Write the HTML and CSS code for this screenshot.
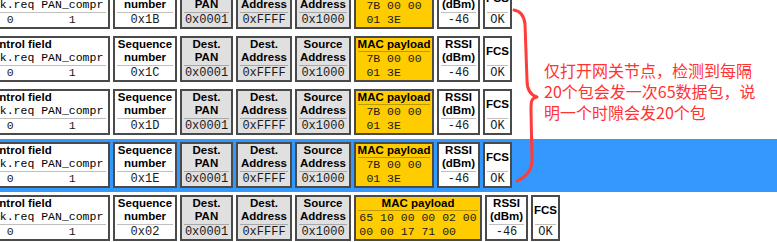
FILE: index.html
```html
<!doctype html>
<html>
 <head>
  <meta http-equiv="Content-Type" content="text/html; charset=UTF-8">
  <title>Packet Sniffer</title>
  <link rel="stylesheet" href="styles.css">
 </head>
 <body>
    <!--S. list-->
    <div id="list">
        <div class="row">
            <div class="box ctl">
                <div class="hd"><span class="t">Control field</span><span class="sub"><span class="c1">Ack.req</span><span class="c2">PAN_compr</span></span></div>
                <div class="sep"></div>
                <div class="val sub"><span class="c1">0</span><span class="c2">1</span></div>
            </div>
            <div class="box seq"><div class="hd">Sequence<br>number</div><div class="sep"></div><div class="val">0x1B</div></div>
            <div class="box pan g"><div class="hd">Dest.<br>PAN</div><div class="sep"></div><div class="val">0x0001</div></div>
            <div class="box addr g"><div class="hd">Dest.<br>Address</div><div class="sep"></div><div class="val">0xFFFF</div></div>
            <div class="box addr g"><div class="hd">Source<br>Address</div><div class="sep"></div><div class="val">0x1000</div></div>
            <div class="box mac"><div class="mh">MAC payload</div><div class="sep"></div><div class="md"><span>7B 00 00<br>01 3E</span></div></div>
            <div class="box rssi"><div class="hd">RSSI<br>(dBm)</div><div class="sep"></div><div class="val">-46</div></div>
            <div class="box fcs"><div class="hd">FCS</div><div class="sep"></div><div class="val">OK</div></div>
        </div>
        <div class="row">
            <div class="box ctl">
                <div class="hd"><span class="t">Control field</span><span class="sub"><span class="c1">Ack.req</span><span class="c2">PAN_compr</span></span></div>
                <div class="sep"></div>
                <div class="val sub"><span class="c1">0</span><span class="c2">1</span></div>
            </div>
            <div class="box seq"><div class="hd">Sequence<br>number</div><div class="sep"></div><div class="val">0x1C</div></div>
            <div class="box pan g"><div class="hd">Dest.<br>PAN</div><div class="sep"></div><div class="val">0x0001</div></div>
            <div class="box addr g"><div class="hd">Dest.<br>Address</div><div class="sep"></div><div class="val">0xFFFF</div></div>
            <div class="box addr g"><div class="hd">Source<br>Address</div><div class="sep"></div><div class="val">0x1000</div></div>
            <div class="box mac"><div class="mh">MAC payload</div><div class="sep"></div><div class="md"><span>7B 00 00<br>01 3E</span></div></div>
            <div class="box rssi"><div class="hd">RSSI<br>(dBm)</div><div class="sep"></div><div class="val">-46</div></div>
            <div class="box fcs"><div class="hd">FCS</div><div class="sep"></div><div class="val">OK</div></div>
        </div>
        <div class="row">
            <div class="box ctl">
                <div class="hd"><span class="t">Control field</span><span class="sub"><span class="c1">Ack.req</span><span class="c2">PAN_compr</span></span></div>
                <div class="sep"></div>
                <div class="val sub"><span class="c1">0</span><span class="c2">1</span></div>
            </div>
            <div class="box seq"><div class="hd">Sequence<br>number</div><div class="sep"></div><div class="val">0x1D</div></div>
            <div class="box pan g"><div class="hd">Dest.<br>PAN</div><div class="sep"></div><div class="val">0x0001</div></div>
            <div class="box addr g"><div class="hd">Dest.<br>Address</div><div class="sep"></div><div class="val">0xFFFF</div></div>
            <div class="box addr g"><div class="hd">Source<br>Address</div><div class="sep"></div><div class="val">0x1000</div></div>
            <div class="box mac"><div class="mh">MAC payload</div><div class="sep"></div><div class="md"><span>7B 00 00<br>01 3E</span></div></div>
            <div class="box rssi"><div class="hd">RSSI<br>(dBm)</div><div class="sep"></div><div class="val">-46</div></div>
            <div class="box fcs"><div class="hd">FCS</div><div class="sep"></div><div class="val">OK</div></div>
        </div>
        <div class="row on">
            <div class="box ctl">
                <div class="hd"><span class="t">Control field</span><span class="sub"><span class="c1">Ack.req</span><span class="c2">PAN_compr</span></span></div>
                <div class="sep"></div>
                <div class="val sub"><span class="c1">0</span><span class="c2">1</span></div>
            </div>
            <div class="box seq"><div class="hd">Sequence<br>number</div><div class="sep"></div><div class="val">0x1E</div></div>
            <div class="box pan g"><div class="hd">Dest.<br>PAN</div><div class="sep"></div><div class="val">0x0001</div></div>
            <div class="box addr g"><div class="hd">Dest.<br>Address</div><div class="sep"></div><div class="val">0xFFFF</div></div>
            <div class="box addr g"><div class="hd">Source<br>Address</div><div class="sep"></div><div class="val">0x1000</div></div>
            <div class="box mac"><div class="mh">MAC payload</div><div class="sep"></div><div class="md"><span>7B 00 00<br>01 3E</span></div></div>
            <div class="box rssi"><div class="hd">RSSI<br>(dBm)</div><div class="sep"></div><div class="val">-46</div></div>
            <div class="box fcs"><div class="hd">FCS</div><div class="sep"></div><div class="val">OK</div></div>
        </div>
        <div class="row">
            <div class="box ctl">
                <div class="hd"><span class="t">Control field</span><span class="sub"><span class="c1">Ack.req</span><span class="c2">PAN_compr</span></span></div>
                <div class="sep"></div>
                <div class="val sub"><span class="c1">0</span><span class="c2">1</span></div>
            </div>
            <div class="box seq"><div class="hd">Sequence<br>number</div><div class="sep"></div><div class="val">0x02</div></div>
            <div class="box pan g"><div class="hd">Dest.<br>PAN</div><div class="sep"></div><div class="val">0x0001</div></div>
            <div class="box addr g"><div class="hd">Dest.<br>Address</div><div class="sep"></div><div class="val">0xFFFF</div></div>
            <div class="box addr g"><div class="hd">Source<br>Address</div><div class="sep"></div><div class="val">0x1000</div></div>
            <div class="box mac wide"><div class="mh">MAC payload</div><div class="sep"></div><div class="md"><span>65 10 00 00 02 00<br>00 00 17 71 00</span></div></div>
            <div class="box rssi"><div class="hd">RSSI<br>(dBm)</div><div class="sep"></div><div class="val">-46</div></div>
            <div class="box fcs"><div class="hd">FCS</div><div class="sep"></div><div class="val">OK</div></div>
        </div>
    </div>
    <!--E. list-->

    <!--S. note-->
    <svg class="brace" width="777" height="242" viewBox="0 0 777 242">
        <path d="M514,10 C520,11 524,15 525,24 L527,80 C527,90 530,95 537,97 C531,98 531,102 531,110 L532,160 C532,170 526,177 517,181" fill="none" stroke="#ff3b3b" stroke-width="3" stroke-linecap="round" stroke-linejoin="round"/>
    </svg>
    <p class="note">仅打开网关节点，检测到每隔<br>20个包会发一次65数据包，说<br>明一个时隙会发20个包</p>
    <!--E. note-->
 </body>
</html>
```

FILE: styles.css
```css
*{padding:0;margin:0;box-sizing:border-box;}
html,body{overflow:hidden;background:#fff;}
body{width:777px;height:242px;position:relative;font-family:"Liberation Sans",Arial,sans-serif;color:#000;}
/*S. list*/
#list{margin-top:-20px;}
#list .row{display:flex;gap:3px;padding:3px 0 4px;height:53px;white-space:nowrap;}
#list .row.on{background:#3399ff;}
#list .box{height:46px;border:2px solid #4a4a4a;background:#fff;display:flex;flex-direction:column;text-align:center;}
#list .box.g{background:#e0e0e0;}
#list .box.mac{background:#ffcc00;}
#list .hd{height:26px;font-size:11.5px;font-weight:bold;line-height:13px;display:flex;flex-direction:column;justify-content:center;align-items:center;}
#list .sep{height:1px;margin:1px 2px 0;background:rgba(0,0,0,0.25);}
#list .val{height:14px;line-height:14px;font-family:"Liberation Mono","Courier New",monospace;font-size:12px;color:#1a1a1a;}
#list .ctl{width:132px;margin-left:-22px;text-align:left;}
#list .ctl .hd{align-items:flex-start;}
#list .ctl .t{padding-left:4px;}
#list .sub{display:flex;gap:1ch;padding-left:6px;font-family:"Liberation Mono","Courier New",monospace;font-size:11.5px;font-weight:normal;}
#list .sub .c1{width:7ch;text-align:center;}
#list .sub .c2{width:9ch;text-align:center;}
#list .seq{width:64px;}
#list .pan{width:53px;}
#list .addr{width:56px;}
#list .mac{width:80px;}
#list .mac.wide{width:128px;}
#list .rssi{width:43px;}
#list .fcs{width:29px;}
#list .mh{height:13px;line-height:13px;font-size:11.5px;font-weight:bold;}
#list .mac .sep{margin:0 2px;}
#list .md{font-family:"Liberation Mono","Courier New",monospace;font-size:11.5px;line-height:14px;color:#1a1a1a;}
#list .md span{display:inline-block;text-align:left;}
/*E. list*/
/*S. note*/
.brace{position:absolute;left:0;top:0;pointer-events:none;}
.note{position:absolute;left:544px;top:60px;font-family:"Noto Sans CJK SC",sans-serif;font-size:16px;line-height:21px;color:#ff3333;white-space:nowrap;}
/*E. note*/
```
